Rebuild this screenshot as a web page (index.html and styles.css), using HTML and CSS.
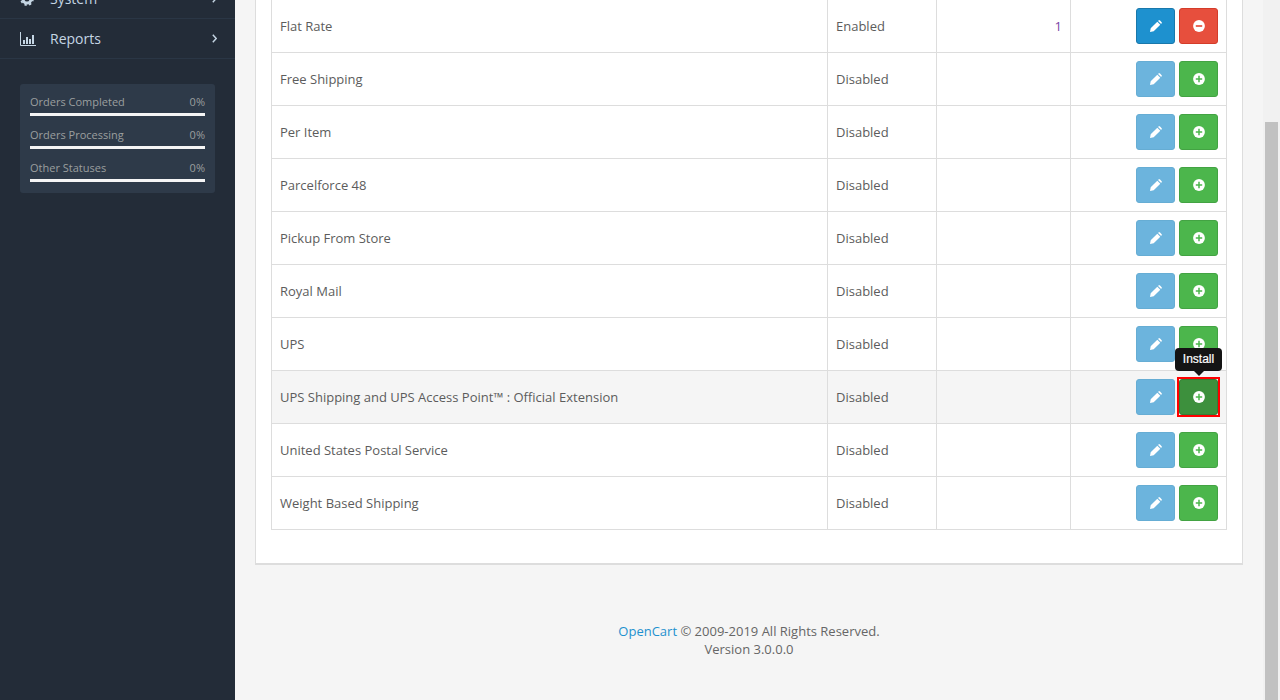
FILE: index.html
```html
<!DOCTYPE html>
<html lang="en">
<head>
<meta charset="utf-8">
<title>Shipping</title>
<link rel="stylesheet" href="styles.css">
</head>
<body>
<svg class="defs" width="0" height="0" aria-hidden="true">
  <symbol id="pencil" viewBox="0 0 12 12"><path d="M0 12 L0.7 8.3 L7.3 1.7 L10.3 4.7 L3.7 11.3 Z M8.1 0.9 L8.7 0.35 Q9.2 -0.1 9.8 0.35 L11.65 2.2 Q12.1 2.8 11.65 3.3 L11.1 3.9 Z" fill="#fff"/></symbol>
  <symbol id="plus" viewBox="0 0 12 12"><circle cx="6" cy="6" r="5.9" fill="#fff"/><path d="M6 2.8v6.4M2.8 6h6.4" stroke="#4cb64c" stroke-width="1.5"/></symbol>
  <symbol id="minus" viewBox="0 0 12 12"><circle cx="6" cy="6" r="5.9" fill="#fff"/><path d="M2.8 6h6.4" stroke="#e74f3d" stroke-width="1.7"/></symbol>
  <symbol id="chev" viewBox="0 0 5 9"><path d="M0.8 0.8 L4.2 4.5 L0.8 8.2" fill="none" stroke="#c5d6e4" stroke-width="1.4"/></symbol>
</svg>
<div class="app">
  <aside class="sidebar">
    <nav class="menu">
      <a class="menu-item menu-system">
        <svg class="menu-icon" viewBox="0 0 16 14"><circle cx="7" cy="7" r="4" fill="none" stroke="#c5d6e4" stroke-width="3"/><circle cx="7" cy="7" r="6" fill="none" stroke="#c5d6e4" stroke-width="1.6" stroke-dasharray="2.4 2.3"/></svg>
        <span class="menu-label">System</span><svg class="chev"><use href="#chev"/></svg>
      </a>
      <a class="menu-item">
        <svg class="menu-icon" viewBox="0 0 16 14"><path d="M0.5 0v13.5H16" fill="none" stroke="#c5d6e4"/><path d="M3 8h2v4H3zM6 5h2v7H6zM9 7h2v5H9zM12 3h2v9h-2z" fill="#c5d6e4"/></svg>
        <span class="menu-label">Reports</span><svg class="chev"><use href="#chev"/></svg>
      </a>
    </nav>
    <div class="stats">
      <div class="stat"><div class="stat-row"><span>Orders Completed</span><span>0%</span></div><div class="bar"></div></div>
      <div class="stat"><div class="stat-row"><span>Orders Processing</span><span>0%</span></div><div class="bar"></div></div>
      <div class="stat"><div class="stat-row"><span>Other Statuses</span><span>0%</span></div><div class="bar"></div></div>
    </div>
  </aside>
  <main class="content">
    <section class="panel">
      <table class="table">
        <colgroup><col class="c-name"><col class="c-status"><col class="c-order"><col class="c-action"></colgroup>
        <tbody>
          <tr><td>Flat Rate</td><td>Enabled</td><td class="num">1</td><td class="act"><a class="btn btn-edit"><svg class="ico"><use href="#pencil"/></svg></a><a class="btn btn-remove"><svg class="ico"><use href="#minus"/></svg></a></td></tr>
          <tr><td>Free Shipping</td><td>Disabled</td><td></td><td class="act"><a class="btn btn-edit off"><svg class="ico"><use href="#pencil"/></svg></a><a class="btn btn-add"><svg class="ico"><use href="#plus"/></svg></a></td></tr>
          <tr><td>Per Item</td><td>Disabled</td><td></td><td class="act"><a class="btn btn-edit off"><svg class="ico"><use href="#pencil"/></svg></a><a class="btn btn-add"><svg class="ico"><use href="#plus"/></svg></a></td></tr>
          <tr><td>Parcelforce 48</td><td>Disabled</td><td></td><td class="act"><a class="btn btn-edit off"><svg class="ico"><use href="#pencil"/></svg></a><a class="btn btn-add"><svg class="ico"><use href="#plus"/></svg></a></td></tr>
          <tr><td>Pickup From Store</td><td>Disabled</td><td></td><td class="act"><a class="btn btn-edit off"><svg class="ico"><use href="#pencil"/></svg></a><a class="btn btn-add"><svg class="ico"><use href="#plus"/></svg></a></td></tr>
          <tr><td>Royal Mail</td><td>Disabled</td><td></td><td class="act"><a class="btn btn-edit off"><svg class="ico"><use href="#pencil"/></svg></a><a class="btn btn-add"><svg class="ico"><use href="#plus"/></svg></a></td></tr>
          <tr><td>UPS</td><td>Disabled</td><td></td><td class="act"><a class="btn btn-edit off"><svg class="ico"><use href="#pencil"/></svg></a><a class="btn btn-add"><svg class="ico"><use href="#plus"/></svg></a></td></tr>
          <tr class="hover"><td>UPS Shipping and UPS Access Point™ : Official Extension</td><td>Disabled</td><td></td><td class="act"><a class="btn btn-edit off"><svg class="ico"><use href="#pencil"/></svg></a><a class="btn btn-add active"><svg class="ico"><use href="#plus"/></svg><span class="tooltip">Install</span></a></td></tr>
          <tr><td>United States Postal Service</td><td>Disabled</td><td></td><td class="act"><a class="btn btn-edit off"><svg class="ico"><use href="#pencil"/></svg></a><a class="btn btn-add"><svg class="ico"><use href="#plus"/></svg></a></td></tr>
          <tr><td>Weight Based Shipping</td><td>Disabled</td><td></td><td class="act"><a class="btn btn-edit off"><svg class="ico"><use href="#pencil"/></svg></a><a class="btn btn-add"><svg class="ico"><use href="#plus"/></svg></a></td></tr>
        </tbody>
      </table>
    </section>
    <footer class="footer"><a>OpenCart</a> © 2009-2019 All Rights Reserved.<br>Version 3.0.0.0</footer>
  </main>
  <div class="scrollbar"><div class="thumb"></div></div>
</div>
</body>
</html>
```

FILE: styles.css
```css
* { box-sizing: border-box; }
html, body { margin: 0; height: 700px; overflow: hidden; }
body { font-family: "Open Sans", sans-serif; font-size: 12px; color: #666; background: #f5f5f5; }
.defs { display: block; height: 0; }
.app { display: flex; height: 700px; overflow: hidden; }

.sidebar { width: 235px; flex: none; background: #232c38; }
.menu { margin-top: -21px; }
.menu-item { display: flex; align-items: center; height: 40px; padding: 0 18px 0 20px; border-bottom: 1px solid #2a3645; color: #c5d6e4; font-size: 14px; }
.menu-icon { width: 16px; height: 14px; flex: none; margin-right: 14px; }
.menu-label { flex: 1; }
.chev { width: 5px; height: 9px; flex: none; margin-top: -1px; }
.stats { margin: 25px 20px 0; padding: 6px 10px 4px; background: #2e3a49; border-radius: 3px; }
.stat { height: 33px; padding-top: 4px; }
.stat-row { display: flex; justify-content: space-between; font-size: 11px; line-height: 16px; color: #9b9f9f; }
.bar { height: 3px; margin-top: 3px; background: #f5f5f5; }

.content { flex: 1; min-width: 0; padding: 0 20px; }
.panel { width: 988px; margin-top: -2px; background: #fff; border: 1px solid #ddd; border-top: 0; border-bottom-width: 2px; padding: 0 15px 33px; }
.table { width: 955px; border-collapse: collapse; table-layout: fixed; font-size: 13px; color: #5c5c5c; }
.c-name { width: 556px; }
.c-status { width: 109px; }
.c-order { width: 134px; }
.c-action { width: 156px; }
.table td { height: 53px; padding: 0 8px; border: 1px solid #ddd; vertical-align: middle; }
.table tr:first-child td { height: 54px; padding-top: 2px; border-top: 0; }
.hover td { background: #f5f5f5; }
.num { text-align: right; color: #7a3fa5; }
.act { text-align: right; font-size: 0; }

.btn { position: relative; display: inline-flex; align-items: center; justify-content: center; width: 39px; height: 36px; margin-left: 4px; border-radius: 3px; border: 1px solid; vertical-align: middle; }
.ico { width: 12px; height: 12px; }
.btn-edit { background: #1e91cf; border-color: #1978ab; }
.btn-edit.off { background: #6cb4dd; border-color: #66add4; }
.btn-remove { background: #e74f3d; border-color: #d43c2a; }
.btn-add { background: #4cb64c; border-color: #43a343; }
.btn-add.active { background: #3d903d; border-color: #357d35; }
.btn-add.active::before { content: ""; position: absolute; inset: -3px; border: 2px solid #f00; }
.tooltip { position: absolute; left: -5px; top: -32px; width: 47px; height: 23px; background: #141414; border-radius: 4px; color: #fff; font-family: "Liberation Sans", sans-serif; font-size: 12px; line-height: 23px; text-align: center; -webkit-text-stroke: 0.2px #fff; }
.tooltip::after { content: ""; position: absolute; left: 19px; top: 23px; border: 5px solid transparent; border-top-color: #141414; border-bottom: 0; }

.footer { margin-top: 57px; text-align: center; font-size: 13px; line-height: 18px; color: #666; }
.footer a { color: #1e91cf; }

.scrollbar { width: 17px; flex: none; background: #f1f1f1; padding: 122px 2px 0; }
.thumb { height: 100%; background: #c1c1c1; }
```
